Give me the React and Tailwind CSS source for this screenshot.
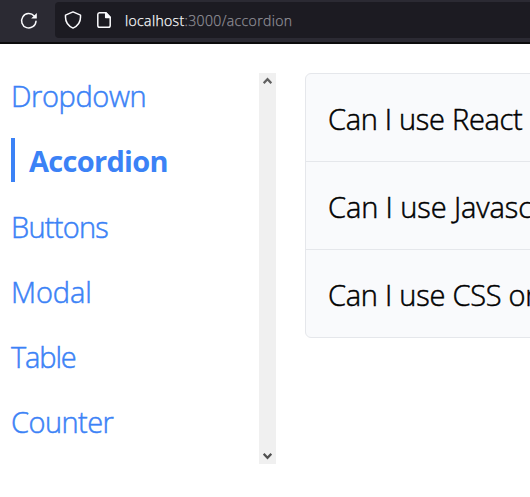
const links = [
  { name: "Dropdown", fit: "tracking-[-0.4px]" },
  { name: "Accordion", fit: "tracking-[-0.7px]", active: true },
  { name: "Buttons", fit: "tracking-[-0.75px]" },
  { name: "Modal", fit: "tracking-[-0.1px]" },
  { name: "Table", fit: "tracking-[-1.15px]" },
  { name: "Counter", fit: "tracking-[-0.55px]" },
];

const questions = [
  { text: "Can I use React on a project?", fit: "tracking-[-0.3px]" },
  { text: "Can I use Javascript on a project?", fit: "tracking-[-0.1px]" },
  { text: "Can I use CSS on a project?", fit: "tracking-[-0.25px]" },
];

function BrowserBar() {
  return (
    <header className="flex h-11 items-start border-b-2 border-[#0c0c0d] bg-[#2b2a33]">
      <svg className="ml-5 mt-3 size-[18px] shrink-0" viewBox="0 0 18 18" fill="none" stroke="#fbfbfe" strokeWidth="1.5">
        <path d="M16 9.2A7.2 7.2 0 1 1 14.2 4" strokeLinecap="round" />
        <path d="M16.8.9v5.6h-5.6z" fill="#fbfbfe" stroke="none" />
      </svg>
      <div className="ml-[17px] mt-0.5 flex h-9 flex-1 items-center rounded-l bg-[#1c1b22]">
        <svg className="ml-[9px] size-[18px] shrink-0" viewBox="0 0 18 18" fill="none" stroke="#fbfbfe" strokeWidth="1.5" strokeLinejoin="round">
          <path d="M9 .9 1.5 4.1v2.2c0 4.6 2.8 8.7 7.5 10.8 4.7-2.1 7.5-6.2 7.5-10.8V4.1z" />
        </svg>
        <svg className="ml-[15px] h-4 w-3.5 shrink-0" viewBox="0 0 14 16" fill="none" stroke="#fbfbfe" strokeWidth="1.5" strokeLinejoin="round">
          <path d="M2.5.8H9l4.2 4.4v8.2a1.8 1.8 0 0 1-1.8 1.8H2.6a1.8 1.8 0 0 1-1.8-1.8V2.6A1.8 1.8 0 0 1 2.5.8z" />
          <path d="M8.7.8v4.7h4.5z" fill="#fbfbfe" />
        </svg>
        <span className="ml-[14px] mt-0.5 whitespace-nowrap text-[14px] font-light leading-5 tracking-[0.36px] text-[#8f8e96] [-webkit-text-stroke:0.25px]">
          <span className="text-[#fbfbfe]">localhost</span>:3000/accordion
        </span>
      </div>
    </header>
  );
}

function Sidebar() {
  return (
    <aside className="flex h-[391px] w-[265px] shrink-0 justify-between">
      <nav className="flex flex-col gap-[21.3px] text-[29px] leading-[46px] text-[#3b82f6]">
        {links.map((l) => (
          <a
            key={l.name}
            className={`h-11 ${l.fit} ${l.active ? "border-l-4 border-[#3b82f6] pl-3.5 font-bold" : "font-light [-webkit-text-stroke:0.5px]"}`}
          >
            {l.name}
          </a>
        ))}
      </nav>
      <div className="flex w-[17px] flex-col items-center justify-between bg-[#f0f0f0] py-1">
        <svg className="h-2 w-[9px]" viewBox="0 0 9 8" fill="none" stroke="#606060" strokeWidth="2.2">
          <path d="M.7 6.2 4.5 2.2l3.8 4" />
        </svg>
        <svg className="h-2 w-[9px]" viewBox="0 0 9 8" fill="none" stroke="#505050" strokeWidth="2.2">
          <path d="m.7 1.8 3.8 4 3.8-4" />
        </svg>
      </div>
    </aside>
  );
}

export default function App() {
  return (
    <div className="h-[497px] w-[530px] overflow-hidden bg-white font-['Open_Sans',sans-serif]">
      <BrowserBar />
      <main className="flex pl-[11px] pt-[29px]">
        <Sidebar />
        <section className="ml-[29px] w-[600px] shrink-0 self-start rounded-md border border-[#e5e7eb] bg-[#f9fafc]">
          {questions.map((q) => (
            <div
              key={q.text}
              className={`flex h-[88px] items-center whitespace-nowrap border-b border-[#e5e7eb] pl-[22px] pt-0.5 text-[29px] font-light text-black [-webkit-text-stroke:0.5px] last:h-[87px] last:border-b-0 ${q.fit}`}
            >
              {q.text}
            </div>
          ))}
        </section>
      </main>
    </div>
  );
}
